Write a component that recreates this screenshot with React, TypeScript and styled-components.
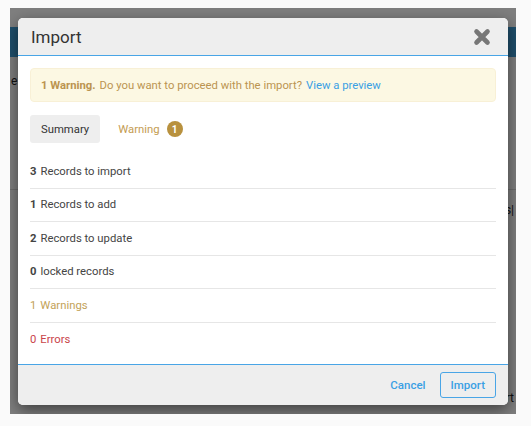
import React from "react";
import styled, { createGlobalStyle } from "styled-components";

const Global = createGlobalStyle`
  html, body { margin: 0; padding: 0; background: #fafafa; }
  body { font-family: Roboto, "Liberation Sans", Arial, sans-serif; }
  * { box-sizing: border-box; }
`;

const Frame = styled.div`
  position: relative;
  width: 506px;
  height: 406px;
  margin: 8px 0 0 10px;
  overflow: hidden;
  background: #ffffff;
`;

const AppTop = styled.div`
  height: 19px;
  background: #ffffff;
`;

const AppHeader = styled.div`
  height: 30px;
  background: #3e9ed8;
`;

const AppContent = styled.div`
  display: flex;
  flex-direction: column;
  font-size: 12px;
  color: #222;
`;

const AppLine = styled.div<{ $h: number; $border?: boolean }>`
  height: ${(p) => p.$h}px;
  display: flex;
  align-items: center;
  justify-content: space-between;
  padding: 0 2px 0 1px;
  border-bottom: ${(p) => (p.$border ? "1px solid #dddddd" : "none")};
`;

const Backdrop = styled.div`
  position: absolute;
  inset: 0;
  background: rgba(0, 0, 0, 0.5);
`;

const Dialog = styled.div`
  position: absolute;
  left: 8px;
  top: 10px;
  width: 490px;
  height: 387px;
  border-radius: 5px;
  background: #ffffff;
  box-shadow: 0 5px 15px rgba(0, 0, 0, 0.5);
  display: flex;
  flex-direction: column;
  overflow: hidden;
`;

const Header = styled.div`
  height: 38px;
  flex: none;
  background: #eeeeee;
  border-bottom: 1px solid #49a5e6;
  display: flex;
  align-items: center;
  justify-content: space-between;
  padding: 0 16px 0 13px;
`;

const Title = styled.h4`
  margin: 0;
  font-size: 17px;
  font-weight: 400;
  color: #333333;
`;

const Close = styled.button`
  border: 0;
  background: none;
  padding: 0;
  width: 20px;
  height: 20px;
  display: flex;
  align-items: center;
  justify-content: center;
  cursor: pointer;
`;

const Body = styled.div`
  flex: 1;
  padding: 12px 12px 0 12px;
  display: flex;
  flex-direction: column;
  font-size: 11.3px;
`;

const Alert = styled.div`
  height: 34px;
  border-radius: 4px;
  background: #fcf8e3;
  border: 1px solid #f8f0d6;
  display: flex;
  align-items: center;
  padding: 0 10px;
  color: #bb9450;
`;

const Strong = styled.b`
  font-weight: 700;
  margin-right: 4px;
`;

const Link = styled.a`
  color: #3aa0e4;
  text-decoration: none;
  margin-left: 4px;
`;

const Tabs = styled.div`
  display: flex;
  align-items: center;
  gap: 18px;
  margin-top: 13px;
`;

const Tab = styled.div<{ $active?: boolean }>`
  height: 28px;
  padding: 0 11px;
  border-radius: 3px;
  display: flex;
  align-items: center;
  gap: 7px;
  background: ${(p) => (p.$active ? "#eeeeee" : "transparent")};
  color: ${(p) => (p.$active ? "#333333" : "#c49c52")};
  padding-left: ${(p) => (p.$active ? "11px" : "0")};
`;

const Badge = styled.span`
  width: 16px;
  height: 16px;
  border-radius: 50%;
  background: #b8913e;
  color: #ffffff;
  font-size: 10px;
  font-weight: 700;
  display: inline-flex;
  align-items: center;
  justify-content: center;
`;

const Rows = styled.div`
  margin-top: 12px;
  display: flex;
  flex-direction: column;
`;

const Row = styled.div<{ $tone?: "warn" | "error"; $last?: boolean }>`
  height: ${(p) => (p.$last ? "33px" : "33.5px")};
  display: flex;
  align-items: center;
  color: ${(p) =>
    p.$tone === "warn" ? "#c3a258" : p.$tone === "error" ? "#c9444a" : "#444444"};
  border-bottom: ${(p) => (p.$last ? "none" : "1px solid #e6e6e6")};
`;

const Num = styled.span<{ $bold?: boolean }>`
  font-weight: ${(p) => (p.$bold ? 700 : 400)};
  margin-right: 4px;
`;

const Footer = styled.div`
  height: 41px;
  flex: none;
  background: #eeeeee;
  border-top: 1px solid #49a5e6;
  display: flex;
  align-items: center;
  justify-content: flex-end;
  gap: 6px;
  padding: 0 12px 0 0;
`;

const Btn = styled.button<{ $outline?: boolean }>`
  height: 26px;
  padding: 0 ${(p) => (p.$outline ? "10px" : "7px")};
  border-radius: 3px;
  font-family: inherit;
  font-size: 11.5px;
  font-weight: 500;
  color: #3aa0e4;
  background: transparent;
  border: 1px solid ${(p) => (p.$outline ? "#49a5e6" : "transparent")};
  cursor: pointer;
`;

const rows = [
  { n: "3", label: "Records to import", bold: true },
  { n: "1", label: "Records to add", bold: true },
  { n: "2", label: "Records to update", bold: true },
  { n: "0", label: "locked records", bold: true },
  { n: "1", label: "Warnings", tone: "warn" as const },
  { n: "0", label: "Errors", tone: "error" as const },
];

export default function App() {
  return (
    <>
      <Global />
      <Frame>
        <AppTop />
        <AppHeader />
        <AppContent>
          <AppLine $h={48}>e</AppLine>
          <AppLine $h={85} $border />
          <AppLine $h={40}>
            <span />
            <span>s|</span>
          </AppLine>
          <AppLine $h={160} />
          <AppLine $h={16}>
            <span />
            <span>rt</span>
          </AppLine>
        </AppContent>
        <Backdrop />
        <Dialog>
          <Header>
            <Title>Import</Title>
            <Close aria-label="Close">
              <svg width="18" height="18" viewBox="0 0 18 18">
                <path
                  d="M3.5 3.5 L14.5 14.5 M14.5 3.5 L3.5 14.5"
                  stroke="#777777"
                  strokeWidth="4.6"
                  strokeLinecap="round"
                />
              </svg>
            </Close>
          </Header>
          <Body>
            <Alert>
              <Strong>1 Warning.</Strong> Do you want to proceed with the import?
              <Link href="#">View a preview</Link>
            </Alert>
            <Tabs>
              <Tab $active>Summary</Tab>
              <Tab>
                Warning <Badge>1</Badge>
              </Tab>
            </Tabs>
            <Rows>
              {rows.map((r, i) => (
                <Row key={i} $tone={r.tone} $last={i === rows.length - 1}>
                  <Num $bold={r.bold}>{r.n}</Num>
                  {r.label}
                </Row>
              ))}
            </Rows>
          </Body>
          <Footer>
            <Btn>Cancel</Btn>
            <Btn $outline>Import</Btn>
          </Footer>
        </Dialog>
      </Frame>
    </>
  );
}
